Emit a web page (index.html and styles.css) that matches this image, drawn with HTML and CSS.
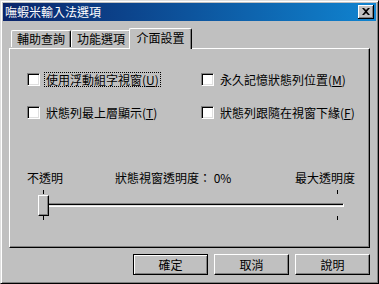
FILE: index.html
```
<!DOCTYPE html>
<html lang="zh-Hant">

<head>
    <meta charset="UTF-8">
    <title>嘸蝦米輸入法選項</title>
    <link rel="stylesheet" href="styles.css">
</head>

<body>
    <div class="window">
        <div class="titlebar">
            <span class="title">嘸蝦米輸入法選項</span>
            <span class="close">
                <svg width="8" height="7" viewBox="0 0 8 7">
                    <path d="M0 0h2l2 2 2-2h2L5 3.5 8 7H6L4 5 2 7H0l3-3.5z" fill="#000"/>
                </svg>
            </span>
        </div>

        <div class="tabs">
            <span class="tab">輔助查詢</span>
            <span class="tab">功能選項</span>
            <span class="tab active">介面設置</span>
        </div>

        <div class="panel">
            <div class="checks">
                <label class="check"><span class="box"></span><span class="text focus">使用浮動組字視窗(<u>U</u>)</span></label>
                <label class="check"><span class="box"></span><span class="text">永久記憶狀態列位置(<u>M</u>)</span></label>
                <label class="check"><span class="box"></span><span class="text">狀態列最上層顯示(<u>T</u>)</span></label>
                <label class="check"><span class="box"></span><span class="text">狀態列跟隨在視窗下緣(<u>F</u>)</span></label>
            </div>

            <div class="slider-labels">
                <span class="lbl-min">不透明</span>
                <span class="lbl-mid">狀態視窗透明度： 0%</span>
                <span class="lbl-max">最大透明度</span>
            </div>

            <div class="slider">
                <span class="tick t1"></span>
                <span class="tick t2"></span>
                <span class="tick t3"></span>
                <span class="tick t4"></span>
                <div class="track"></div>
                <span class="thumb"></span>
            </div>
        </div>

        <div class="buttons">
            <span class="btn default">確定</span>
            <span class="btn">取消</span>
            <span class="btn">說明</span>
        </div>
    </div>
</body>

</html>
```

FILE: styles.css
```
* {
    margin: 0;
    padding: 0;
    box-sizing: border-box;
}

body {
    width: 379px;
    height: 284px;
    font-family: "Noto Sans CJK TC", "Liberation Sans", sans-serif;
    font-size: 12px;
    color: #000;
    background: #c0c0c0;
    overflow: hidden;
}

.window {
    width: 379px;
    height: 284px;
    background: #c0c0c0;
    border-top: 1px solid #dfdfdf;
    border-left: 1px solid #dfdfdf;
    border-right: 1px solid #000;
    border-bottom: 1px solid #000;
    box-shadow: inset 1px 1px 0 #fff, inset -1px -1px 0 #808080;
    padding: 2px 2px 0 2px;
}

.titlebar {
    height: 18px;
    background: linear-gradient(to right, #0a246a, #1084d0);
    display: flex;
    align-items: center;
    justify-content: space-between;
    padding: 0 2px 0 2px;
}

.title {
    color: #fff;
    font-size: 12px;
    line-height: 18px;
}

.close {
    width: 16px;
    height: 14px;
    background: #c0c0c0;
    border-right: 1px solid #000;
    border-bottom: 1px solid #000;
    box-shadow: inset 1px 1px 0 #fff, inset -1px -1px 0 #808080;
    display: flex;
    align-items: center;
    justify-content: center;
}

.close svg {
    display: block;
}

.tabs {
    display: flex;
    align-items: flex-end;
    height: 27px;
    padding-left: 8px;
    position: relative;
    z-index: 1;
}

.tab {
    width: 60px;
    height: 17px;
    text-align: center;
    line-height: 15px;
    border-top: 1px solid #fff;
    border-left: 1px solid #fff;
    border-right: 1px solid #000;
    border-radius: 2px 2px 0 0;
    box-shadow: inset -1px 0 0 #808080;
    background: #c0c0c0;
    margin-bottom: 1px;
}

.tab.active {
    width: 63px;
    height: 21px;
    margin: 0 0 -1px -2px;
    padding-top: 1px;
    line-height: 16px;
}

.panel {
    margin-left: 6px;
    width: 361px;
    height: 200px;
    border-top: 1px solid #fff;
    border-left: 1px solid #fff;
    border-right: 1px solid #000;
    border-bottom: 1px solid #000;
    box-shadow: inset -1px -1px 0 #808080;
    padding: 24px 0 0 17px;
}

.checks {
    display: grid;
    grid-template-columns: 174px 1fr;
    row-gap: 20px;
}

.check {
    display: flex;
    align-items: center;
    height: 13px;
}

.box {
    width: 13px;
    height: 13px;
    background: #fff;
    border-top: 1px solid #808080;
    border-left: 1px solid #808080;
    border-right: 1px solid #fff;
    border-bottom: 1px solid #fff;
    box-shadow: inset 1px 1px 0 #000, inset -1px -1px 0 #dfdfdf;
    margin-right: 5px;
    flex-shrink: 0;
}

.text {
    line-height: 13px;
    padding: 0 1px;
    white-space: nowrap;
}

.text u {
    text-decoration: underline;
}

.focus {
    outline: 1px dotted #000;
    outline-offset: 0;
}

.slider-labels {
    display: flex;
    margin-top: 52px;
    height: 14px;
    line-height: 14px;
}

.lbl-min {
    width: 88px;
}

.lbl-mid {
    width: 180px;
}

.slider {
    position: relative;
    height: 30px;
    margin-top: 5px;
}

.track {
    position: absolute;
    left: 16px;
    top: 13px;
    width: 301px;
    height: 4px;
    border-top: 1px solid #808080;
    border-left: 1px solid #808080;
    border-bottom: 1px solid #fff;
    border-right: 1px solid #fff;
    box-shadow: inset 1px 1px 0 #000, inset -1px -1px 0 #dfdfdf;
}

.thumb {
    position: absolute;
    left: 11px;
    top: 5px;
    width: 11px;
    height: 21px;
    background: #c0c0c0;
    border-top: 1px solid #fff;
    border-left: 1px solid #fff;
    border-right: 1px solid #000;
    border-bottom: 1px solid #000;
    box-shadow: inset -1px -1px 0 #808080;
}

.tick {
    position: absolute;
    width: 1px;
    height: 4px;
    background: #000;
}

.t1 {
    left: 16px;
    top: 0;
}

.t2 {
    left: 16px;
    top: 26px;
}

.t3 {
    left: 310px;
    top: 0;
}

.t4 {
    left: 310px;
    top: 26px;
}

.buttons {
    display: flex;
    justify-content: flex-end;
    gap: 6px;
    width: 367px;
    margin-top: 6px;
}

.btn {
    width: 75px;
    height: 21px;
    line-height: 19px;
    text-align: center;
    background: #c0c0c0;
    border-top: 1px solid #fff;
    border-left: 1px solid #fff;
    border-right: 1px solid #000;
    border-bottom: 1px solid #000;
    box-shadow: inset -1px -1px 0 #808080;
}

.btn.default {
    border: 1px solid #000;
    box-shadow: inset 1px 1px 0 #fff, inset -1px -1px 0 #808080;
}
```
